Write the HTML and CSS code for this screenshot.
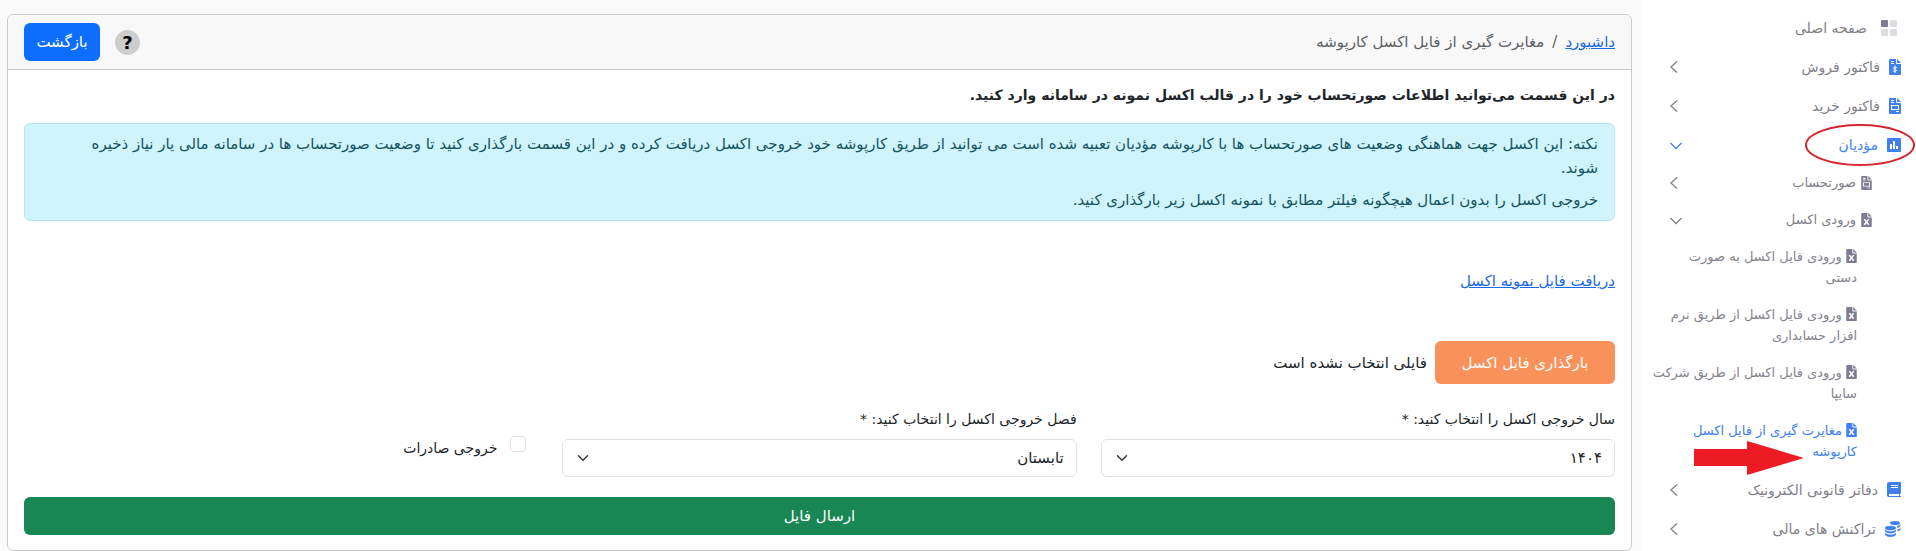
FILE: index.html
```
<!DOCTYPE html>
<html lang="fa" dir="rtl">
<head>
    <meta charset="UTF-8">
    <meta name="viewport" content="width=device-width, initial-scale=1.0">
    <title>مغایرت گیری از فایل اکسل کارپوشه</title>
    <link rel="stylesheet" href="styles.css">
</head>
<body>
    <svg class="sprite" aria-hidden="true">
        <symbol id="icon-excel" viewBox="0 0 12 16">
            <path fill="currentColor" d="M0 1Q0 0 1 0H7V4Q7 5 8 5H12V15Q12 16 11 16H1Q0 16 0 15Z"/>
            <path fill="currentColor" d="M8 0L12 4H8Z"/>
            <path fill="none" stroke="#fff" stroke-width="1.800" d="M3.500 7L8.500 13.500M8.500 7L3.500 13.500"/>
        </symbol>
        <symbol id="icon-invoice" viewBox="0 0 12 16">
            <path fill="currentColor" fill-rule="evenodd" d="M0 1Q0 0 1 0H7V4Q7 5 8 5H12V15Q12 16 11 16H1Q0 16 0 15ZM2 2V3H5V2ZM2 4V5H5V4ZM2 7V12H10V7ZM3 8H9V11H3ZM7 13V14H10V13Z"/>
            <path fill="currentColor" d="M8 0L12 4H8Z"/>
        </symbol>
        <symbol id="icon-dollar" viewBox="0 0 12 16">
            <path fill="currentColor" d="M0 1Q0 0 1 0H7V4Q7 5 8 5H12V15Q12 16 11 16H1Q0 16 0 15Z"/>
            <path fill="currentColor" d="M8 0L12 4H8Z"/>
            <path fill="none" stroke="#fff" d="M2 2.500H5M2 4.500H5M6 6.500V14M7.800 8.500Q4.500 7.500 4.500 9.200Q4.500 10 6 10.300Q7.600 10.700 7.500 11.600Q7 13 4.200 12"/>
        </symbol>
        <symbol id="icon-left" viewBox="0 0 12 12">
            <path fill="none" stroke="currentColor" stroke-width="1.300" d="M7 0.500L1 6L7 11.500"/>
        </symbol>
        <symbol id="icon-down" viewBox="0 0 12 12">
            <path fill="none" stroke="currentColor" stroke-width="1.300" d="M0.500 4L6 9.500L11.500 4"/>
        </symbol>
    </svg>

    <div class="layout">
        <aside class="sidebar">
            <nav>
                <a class="nav-item home" href="#">
                    <svg class="nav-icon" width="16" height="16" viewBox="0 0 16 16">
                        <rect width="7" height="7" rx="1" fill="#7e7b95"/>
                        <rect x="9" width="7" height="7" rx="2" fill="#dcdce2"/>
                        <rect y="9" width="7" height="7" rx="1" fill="#dcdce2"/>
                        <rect x="9" y="9" width="7" height="7" rx="1" fill="#dcdce2"/>
                    </svg>
                    <span>صفحه اصلی</span>
                </a>
                <a class="nav-item" href="#">
                    <svg class="nav-icon blue" width="12" height="16"><use href="#icon-dollar"/></svg>
                    <span>فاکتور فروش</span>
                    <svg class="chevron" width="12" height="12"><use href="#icon-left"/></svg>
                </a>
                <a class="nav-item" href="#">
                    <svg class="nav-icon blue" width="12" height="16"><use href="#icon-invoice"/></svg>
                    <span>فاکتور خرید</span>
                    <svg class="chevron" width="12" height="12"><use href="#icon-left"/></svg>
                </a>
                <a class="nav-item active" href="#">
                    <svg class="nav-icon blue" width="14" height="14" viewBox="0 0 14 14">
                        <rect width="14" height="14" rx="1" fill="currentColor"/>
                        <path fill="#fff" d="M3 6H5V11H3ZM6 3H8V11H6ZM9 8H11V11H9Z"/>
                    </svg>
                    <span>مؤدیان</span>
                    <svg class="chevron" width="12" height="12"><use href="#icon-down"/></svg>
                    <svg class="mark-circle" width="110" height="42" viewBox="0 0 110 42" aria-hidden="true">
                        <ellipse cx="55" cy="21" rx="54" ry="20" fill="none" stroke="#d6262e" stroke-width="2"/>
                    </svg>
                </a>
                <a class="nav-item sub" href="#">
                    <svg class="nav-icon" width="11" height="14"><use href="#icon-invoice"/></svg>
                    <span>صورتحساب</span>
                    <svg class="chevron" width="12" height="12"><use href="#icon-left"/></svg>
                </a>
                <a class="nav-item sub" href="#">
                    <svg class="nav-icon" width="11" height="14"><use href="#icon-excel"/></svg>
                    <span>ورودی اکسل</span>
                    <svg class="chevron" width="12" height="12"><use href="#icon-down"/></svg>
                </a>
                <a class="leaf" href="#"><svg width="11" height="14"><use href="#icon-excel"/></svg> ورودی فایل اکسل به صورت<br>دستی</a>
                <a class="leaf" href="#"><svg width="11" height="14"><use href="#icon-excel"/></svg> ورودی فایل اکسل از طریق نرم<br>افزار حسابداری</a>
                <a class="leaf" href="#"><svg width="11" height="14"><use href="#icon-excel"/></svg> ورودی فایل اکسل از طریق شرکت<br>سایپا</a>
                <a class="leaf active" href="#"><svg width="11" height="14"><use href="#icon-excel"/></svg> مغایرت گیری از فایل اکسل<br>کارپوشه
                    <svg class="mark-arrow" width="110" height="34" viewBox="0 0 110 34" aria-hidden="true">
                        <path fill="#ed1c24" d="M0 8H53V0L110 17L53 34V25H0Z"/>
                    </svg>
                </a>
                <a class="nav-item" href="#">
                    <svg class="nav-icon blue" width="14" height="15" viewBox="0 0 14 15">
                        <path fill="currentColor" fill-rule="evenodd" d="M2 0H13Q14 0 14 1V11L13 12V14H14V15H2Q0 15 0 13V2Q0 0 2 0ZM4 3V4H11V3ZM4 5V6H11V5ZM2 12V14H12V12Z"/>
                    </svg>
                    <span>دفاتر قانونی الکترونیک</span>
                    <svg class="chevron" width="12" height="12"><use href="#icon-left"/></svg>
                </a>
                <a class="nav-item" href="#">
                    <svg class="nav-icon blue" width="16" height="16" viewBox="0 0 16 16">
                        <g fill="currentColor">
                            <ellipse cx="10" cy="2" rx="5" ry="2"/>
                            <path d="M12 5Q15 4.500 15.500 3V5Q15 6.500 12.500 7ZM12.500 8.500Q15 8 15.500 6.500V8.500Q15 10 12.500 10.500Z"/>
                            <ellipse cx="5.500" cy="7" rx="5.500" ry="2.300"/>
                            <path d="M0 8.800Q2 10.500 5.500 10.500T11 8.800V10.500Q9 12.500 5.500 12.500T0 10.500ZM0 12Q2 13.800 5.500 13.800T11 12V14Q9 16 5.500 16T0 14Z"/>
                        </g>
                    </svg>
                    <span>تراکنش های مالی</span>
                    <svg class="chevron" width="12" height="12"><use href="#icon-left"/></svg>
                </a>
            </nav>
        </aside>

        <main class="content">
            <section class="card">
                <header class="card-header">
                    <nav class="breadcrumb">
                        <a href="#">داشبورد</a>
                        <span>/</span>
                        <span>مغایرت گیری از فایل اکسل کارپوشه</span>
                    </nav>
                    <div class="header-actions">
                        <button class="help" type="button" aria-label="راهنما">?</button>
                        <button class="btn btn-primary" type="button">بازگشت</button>
                    </div>
                </header>

                <form class="card-body">
                    <h1>در این قسمت می‌توانید اطلاعات صورتحساب خود را در قالب اکسل نمونه در سامانه وارد کنید.</h1>
                    <div class="alert">
                        <p>نکته: این اکسل جهت هماهنگی وضعیت های صورتحساب ها با کارپوشه مؤدیان تعبیه شده است می توانید از طریق کارپوشه خود خروجی اکسل دریافت کرده و در این قسمت بارگذاری کنید تا وضعیت صورتحساب ها در سامانه مالی یار نیاز ذخیره<br>شوند.</p>
                        <p>خروجی اکسل را بدون اعمال هیچگونه فیلتر مطابق با نمونه اکسل زیر بارگذاری کنید.</p>
                    </div>

                    <a class="sample-link" href="#">دریافت فایل نمونه اکسل</a>

                    <div class="upload">
                        <button class="btn btn-upload" type="button">بارگذاری فایل اکسل</button>
                        <span>فایلی انتخاب نشده است</span>
                    </div>

                    <div class="fields">
                        <div class="field">
                            <label for="year">سال خروجی اکسل را انتخاب کنید: *</label>
                            <select id="year">
                                <option>۱۴۰۴</option>
                            </select>
                        </div>
                        <div class="field">
                            <label for="season">فصل خروجی اکسل را انتخاب کنید: *</label>
                            <select id="season">
                                <option>تابستان</option>
                            </select>
                        </div>
                        <div class="check">
                            <input type="checkbox" id="export">
                            <label for="export">خروجی صادرات</label>
                        </div>
                    </div>

                    <button class="btn btn-success" type="submit">ارسال فایل</button>
                </form>
            </section>
        </main>
    </div>
</body>
</html>
```
FILE: styles.css
```
* {
    box-sizing: border-box;
}
body {
    margin: 0;
    font-family: "DejaVu Sans", sans-serif;
    font-size: 15px;
    line-height: 24px;
    color: #212529;
    background: #fafafb;
}
a {
    color: #1a6ae8;
}
button, input, select {
    font-family: inherit;
    font-size: inherit;
}
.sprite {
    display: none;
}
.layout {
    display: flex;
    min-height: 100vh;
}

/* sidebar */
.sidebar {
    flex: 0 0 274px;
    min-width: 0;
    padding: 8px 15px 0 24px;
    background: #fff;
}
.nav-item {
    position: relative;
    display: flex;
    align-items: center;
    gap: 9px;
    height: 39px;
    font-size: 14px;
    color: #7f7f88;
    text-decoration: none;
}
.nav-item.home {
    gap: 14px;
    padding-right: 4px;
}
.nav-item.sub {
    gap: 5px;
    height: 37px;
    padding-right: 29px;
    font-size: 13px;
}
.nav-icon {
    flex: none;
}
.blue {
    color: #4080f0;
}
.sub .nav-icon {
    color: #7e7b92;
}
.chevron {
    margin-right: auto;
    margin-left: 4px;
}
.nav-item.active {
    color: #4080f0;
}
.leaf {
    position: relative;
    display: block;
    margin-left: -24px;
    padding: 8px 44px 8px 0;
    font-size: 13px;
    line-height: 21px;
    text-decoration: none;
    color: #85858e;
    white-space: nowrap;
}
.leaf svg {
    vertical-align: -2px;
    color: #7e7b92;
}
.leaf.active, .leaf.active svg {
    color: #4080f0;
}
.mark-circle {
    position: absolute;
    top: -1px;
    right: -14px;
}
.leaf .mark-arrow {
    position: absolute;
    top: 29px;
    right: 97px;
}

/* content */
.content {
    flex: 1;
    min-width: 0;
    padding: 14px 10px 0 7px;
}
.card {
    border: 1px solid #cbcbcd;
    border-radius: 6px;
    background: #fff;
}
.card-header {
    display: flex;
    align-items: center;
    justify-content: space-between;
    padding: 8px 16px;
    border-bottom: 1px solid #cbcbcd;
    border-radius: 6px 6px 0 0;
    background: #f8f8f8;
}
.breadcrumb {
    display: flex;
    gap: 8px;
    color: #5d6166;
}
.header-actions {
    display: flex;
    align-items: center;
    gap: 15px;
}
.help {
    width: 25px;
    height: 25px;
    padding: 0;
    border: 0;
    border-radius: 50%;
    background: #cdcdcd;
    color: #000;
    font: bold 18px/25px "DejaVu Sans", sans-serif;
}
.btn {
    height: 38px;
    padding: 0 12px;
    border: 0;
    border-radius: 6px;
    color: #fff;
    font-size: 15px;
    cursor: pointer;
}
.btn-primary {
    width: 76px;
    background: #0d6efd;
}
.card-body {
    padding: 13px 16px 15px;
}
h1 {
    margin: 0 0 16px;
    font-size: 14px;
    line-height: 24px;
}
.alert {
    padding: 8px 16px;
    border: 1px solid #b0e9f3;
    border-radius: 6px;
    background: #cff4fc;
    color: #14535f;
}
.alert p {
    margin: 0 0 8px;
}
.alert p:last-child {
    margin: 0;
}
.sample-link {
    display: block;
    width: fit-content;
    margin: 48px 0;
}
.upload {
    display: flex;
    align-items: center;
    gap: 8px;
    margin-bottom: 23px;
}
.btn-upload {
    width: 180px;
    height: 43px;
    background: #f9925a;
}
.fields {
    display: grid;
    grid-template-columns: repeat(3, 1fr);
    gap: 24px;
    margin-bottom: 20px;
}
.fields label {
    font-size: 14px;
}
.field label {
    display: block;
    margin-bottom: 8px;
}
select {
    display: block;
    width: 100%;
    height: 38px;
    padding: 0 12px;
    border: 1px solid #dee2e6;
    border-radius: 6px;
    appearance: none;
    color: #212529;
    background: #fff url("data:image/svg+xml,%3Csvg xmlns='http://www.w3.org/2000/svg' viewBox='0 0 16 16'%3E%3Cpath fill='none' stroke='%23343a40' stroke-linecap='round' stroke-linejoin='round' stroke-width='2' d='m2 5 6 6 6-6'/%3E%3C/svg%3E") no-repeat 14px center / 12px 12px;
}
.check {
    display: flex;
    align-items: flex-start;
    gap: 13px;
    padding: 29px 12px 0 0;
}
.check input {
    width: 16px;
    height: 16px;
    margin: 0;
    border: 1px solid #dee2e6;
    border-radius: 4px;
    appearance: none;
    background: #fff;
}
.btn-success {
    display: block;
    width: 100%;
    background: #198754;
}
```
